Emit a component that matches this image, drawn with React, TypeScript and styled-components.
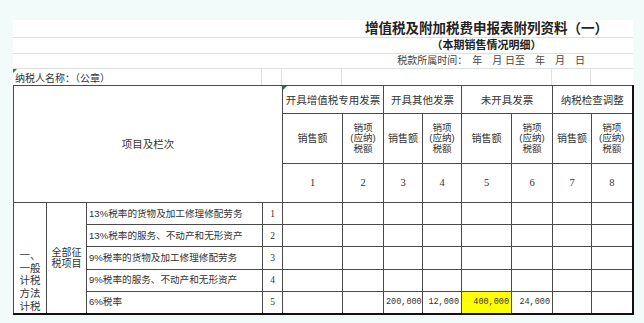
import styled, { createGlobalStyle } from "styled-components";

const SANS = '"Liberation Sans", "Noto Sans CJK SC", sans-serif';

const GlobalStyle = createGlobalStyle`
  html, body {
    margin: 0;
    padding: 0;
    background: #f3fafa;
  }
  body {
    font-family: ${SANS};
    color: #333;
  }
`;

const Page = styled.div`
  width: 644px;
  height: 323px;
  overflow: hidden;
  padding: 20px 0 0 13px;
  box-sizing: border-box;
`;

const Sheet = styled.div`
  width: 620px;
  background: #fff;
`;

const TopRow = styled.div<{ $h: number; $line?: boolean }>`
  height: ${(p) => p.$h}px;
  box-sizing: border-box;
  border-bottom: ${(p) => (p.$line === false ? "none" : "1px solid #e0e0e0")};
  display: flex;
  align-items: center;
`;

const Title = styled.h1`
  margin: 0 0 0 327px;
  flex: 1;
  text-align: center;
  font-size: 13.5px;
  line-height: 16px;
  font-weight: 700;
  color: #222;
  white-space: nowrap;
`;

const SubTitle = styled.div`
  margin-left: 327px;
  flex: 1;
  text-align: center;
  font-size: 11px;
  line-height: 13px;
  font-weight: 700;
  color: #222;
`;

const DateLine = styled.div`
  flex: 1;
  text-align: right;
  padding-right: 48px;
  font-size: 10px;
  line-height: 12px;
  color: #444;
  white-space: pre;
`;

const NameGrid = styled.div`
  display: grid;
  grid-template-columns: 249px 20px 60px 210px 39px 42px;
  height: 100%;
  width: 100%;
`;

const NameCell = styled.div`
  position: relative;
  border-right: 1px solid #e0e0e0;
  display: flex;
  align-items: center;
  padding-left: 2px;
  font-size: 10px;
  color: #333;
  white-space: nowrap;
  &:last-child {
    border-right: none;
  }
`;

const Marker = styled.span`
  position: absolute;
  left: 0;
  top: 0;
  width: 0;
  height: 0;
  border-top: 4px solid #1d8a2a;
  border-right: 4px solid transparent;
`;

const Table = styled.table`
  border-collapse: collapse;
  table-layout: fixed;
  width: 619px;
  border-top: 1px solid #5a5a5a;
  border-left: 1px solid #777;
  border-right: 2px solid #111;
  border-bottom: 2px solid #111;
  background: #fff;
`;

const Row = styled.tr<{ $h: number }>`
  height: ${(p) => p.$h}px;
`;

const Cell = styled.td<{
  $align?: "left" | "center" | "right";
  $size?: number;
  $fill?: string;
  $serif?: boolean;
  $mono?: boolean;
}>`
  position: relative;
  border: 1px solid #4a4a4a;
  padding: 0 2px;
  text-align: ${(p) => p.$align || "center"};
  vertical-align: middle;
  font-size: ${(p) => p.$size || 10}px;
  line-height: 12px;
  color: #333;
  background: ${(p) => p.$fill || "transparent"};
  white-space: nowrap;
  overflow: hidden;
  font-family: ${(p) =>
    p.$mono
      ? '"Liberation Mono", monospace'
      : p.$serif
        ? '"Liberation Serif", serif'
        : SANS};
`;

const GroupCell = styled(Cell)`
  padding: 0;
  font-size: 10.5px;
`;

const StackCell = styled(Cell)`
  padding: 0;
  font-size: 9.6px;
`;

const Line = styled.span`
  display: block;
  height: 10.5px;
  line-height: 10.5px;
`;

const SideCell = styled(Cell)<{ $top?: number }>`
  vertical-align: ${(p) => (p.$top !== undefined ? "top" : "middle")};
  padding-top: ${(p) => p.$top ?? 0}px;
  line-height: ${(p) => (p.$top !== undefined ? 12.7 : 11)}px;
  white-space: normal;
`;

const groups = ["开具增值税专用发票", "开具其他发票", "未开具发票", "纳税检查调整"];

const items = [
  "13%税率的货物及加工修理修配劳务",
  "13%税率的服务、不动产和无形资产",
  "9%税率的货物及加工修理修配劳务",
  "9%税率的服务、不动产和无形资产",
  "6%税率",
];

const values: (string | null)[][] = [
  [null, null, null, null, null, null, null, null],
  [null, null, null, null, null, null, null, null],
  [null, null, null, null, null, null, null, null],
  [null, null, null, null, null, null, null, null],
  [null, null, "200,000", "12,000", "400,000", "24,000", null, null],
];

const highlighted = "400,000";

const Colgroup = () => (
  <colgroup>
    {[33, 40, 176, 20, 60, 41, 39, 39, 50, 41, 39, 41].map((w, i) => (
      <col key={i} style={{ width: w }} />
    ))}
  </colgroup>
);

const TopArea = () => (
  <>
    <TopRow $h={18}>
      <Title>增值税及附加税费申报表附列资料（一）</Title>
    </TopRow>
    <TopRow $h={16}>
      <SubTitle>（本期销售情况明细）</SubTitle>
    </TopRow>
    <TopRow $h={15}>
      <DateLine>税款所属时间：　年　月 日至　年　月　日</DateLine>
    </TopRow>
    <TopRow $h={16} $line={false}>
      <NameGrid>
        <NameCell>
          <Marker />
          纳税人名称：（公章）
        </NameCell>
        <NameCell />
        <NameCell />
        <NameCell />
        <NameCell />
        <NameCell />
      </NameGrid>
    </TopRow>
  </>
);

const App = () => {
  return (
    <>
      <GlobalStyle />
      <Page>
        <Sheet>
          <TopArea />
          <Table>
            <Colgroup />
            <tbody>
              <Row $h={28}>
                <Cell colSpan={4} rowSpan={3} $size={10.5}>
                  项目及栏次
                </Cell>
                {groups.map((g, i) => (
                  <GroupCell key={g} colSpan={2}>
                    {i === 0 && <Marker />}
                    {g}
                  </GroupCell>
                ))}
              </Row>
              <Row $h={50}>
                {groups.map((g) => [
                  <Cell key={g + "a"}>销售额</Cell>,
                  <StackCell key={g + "b"}>
                    <Line>销项</Line>
                    <Line>(应纳)</Line>
                    <Line>税额</Line>
                  </StackCell>,
                ])}
              </Row>
              <Row $h={39}>
                {[1, 2, 3, 4, 5, 6, 7, 8].map((n) => (
                  <Cell key={n} $serif $size={10.5}>
                    {n}
                  </Cell>
                ))}
              </Row>
              {items.map((item, r) => (
                <Row $h={22} key={item}>
                  {r === 0 && (
                    <>
                      <SideCell rowSpan={5} $top={46} $size={10.5}>
                        一、
                        <br />
                        一般
                        <br />
                        计税
                        <br />
                        方法
                        <br />
                        计税
                      </SideCell>
                      <SideCell rowSpan={5}>
                        全部征
                        <br />
                        税项目
                      </SideCell>
                    </>
                  )}
                  <Cell $align="left" $size={9.6}>
                    {item}
                  </Cell>
                  <Cell $serif $size={9.5}>
                    {r + 1}
                  </Cell>
                  {values[r].map((v, c) => (
                    <Cell
                      key={c}
                      $align="right"
                      $mono
                      $size={8.5}
                      $fill={v === highlighted ? "#ffff00" : undefined}
                    >
                      {v}
                    </Cell>
                  ))}
                </Row>
              ))}
            </tbody>
          </Table>
        </Sheet>
      </Page>
    </>
  );
};

export default App;
